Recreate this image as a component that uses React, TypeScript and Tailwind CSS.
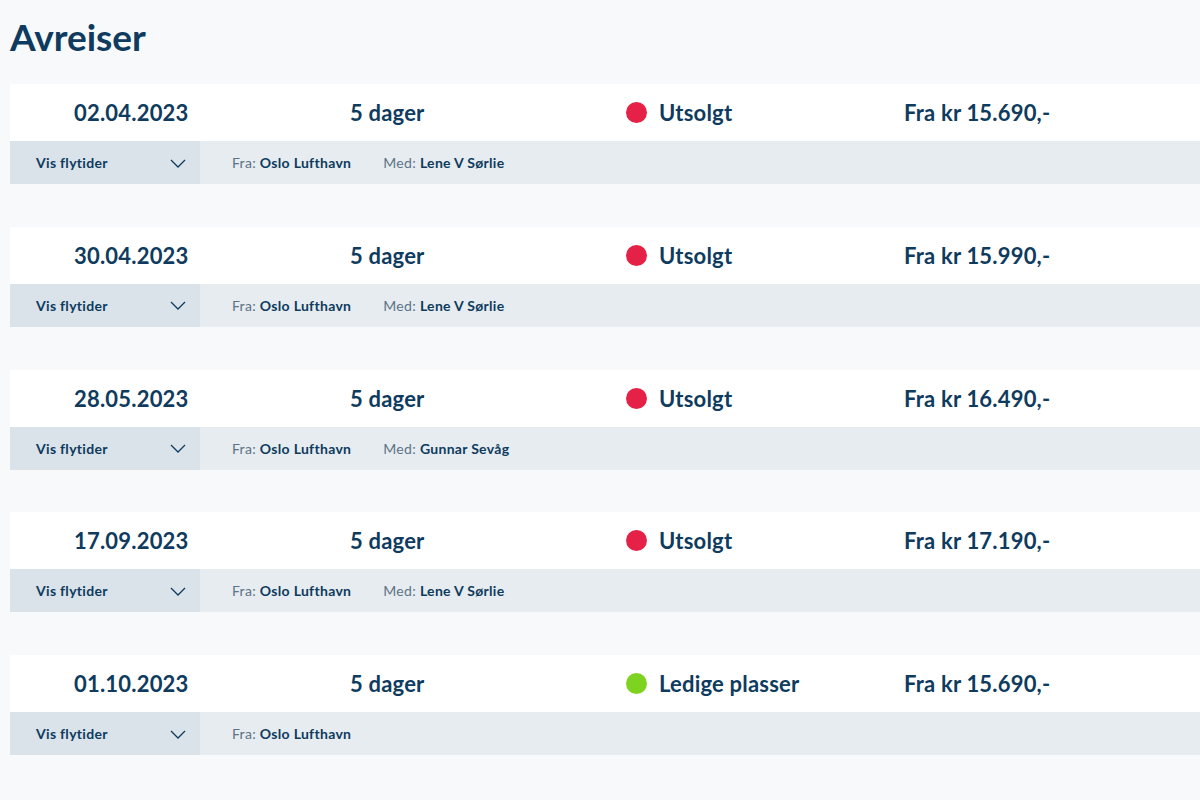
const departures = [
  { date: '02.04.2023', status: 'Utsolgt', soldOut: true, price: 'Fra kr 15.690,-', guide: 'Lene V Sørlie' },
  { date: '30.04.2023', status: 'Utsolgt', soldOut: true, price: 'Fra kr 15.990,-', guide: 'Lene V Sørlie' },
  { date: '28.05.2023', status: 'Utsolgt', soldOut: true, price: 'Fra kr 16.490,-', guide: 'Gunnar Sevåg' },
  { date: '17.09.2023', status: 'Utsolgt', soldOut: true, price: 'Fra kr 17.190,-', guide: 'Lene V Sørlie' },
  { date: '01.10.2023', status: 'Ledige plasser', soldOut: false, price: 'Fra kr 15.690,-', guide: '' }
];

const Departure = ({ d }: { d: (typeof departures)[number] }) => (
  <div className="w-[1200px]">
    <div className="h-[57px] bg-white grid grid-cols-[276px_276px_278px_1fr] items-center pl-16 text-[22px] font-bold tracking-[0.2px]">
      <span>{d.date}</span>
      <span>5 dager</span>
      <span className="flex items-center gap-3">
        <span className={`w-[21px] h-[21px] rounded-full ${d.soldOut ? 'bg-[#e52147]' : 'bg-[#7ed321]'}`} />
        {d.status}
      </span>
      <span>{d.price}</span>
    </div>
    <div className="h-[43px] bg-[#e6ecf0] flex items-center text-[14px] tracking-[0.3px]">
      <button className="w-[190px] h-full bg-[#dae2ea] flex items-center justify-between pl-[26px] pr-[14px] font-bold">
        Vis flytider
        <svg className="w-4 h-4" viewBox="0 0 16 16" fill="none" stroke="currentColor" strokeWidth="1.3">
          <path d="M1 5l7 7 7-7" />
        </svg>
      </button>
      <span className="ml-8">
        <span className="text-[#5d7387]">Fra:</span> <span className="font-bold">Oslo Lufthavn</span>
      </span>
      {d.guide && (
        <span className="ml-8">
          <span className="text-[#5d7387]">Med:</span> <span className="font-bold">{d.guide}</span>
        </span>
      )}
    </div>
  </div>
);

export default function App() {
  return (
    <div
      className="min-h-[800px] bg-[#f7f9fa] text-[#0e3b5e] pl-[10px] overflow-hidden"
      style={{ fontFamily: 'Lato, "Open Sans", sans-serif' }}>
      <h1 className="pt-[14px] h-[84px] text-[37px] font-bold leading-[46px]">Avreiser</h1>
      <div className="flex flex-col gap-[42.75px]">
        {departures.map((d) => (
          <Departure key={d.date} d={d} />
        ))}
      </div>
    </div>
  );
}
